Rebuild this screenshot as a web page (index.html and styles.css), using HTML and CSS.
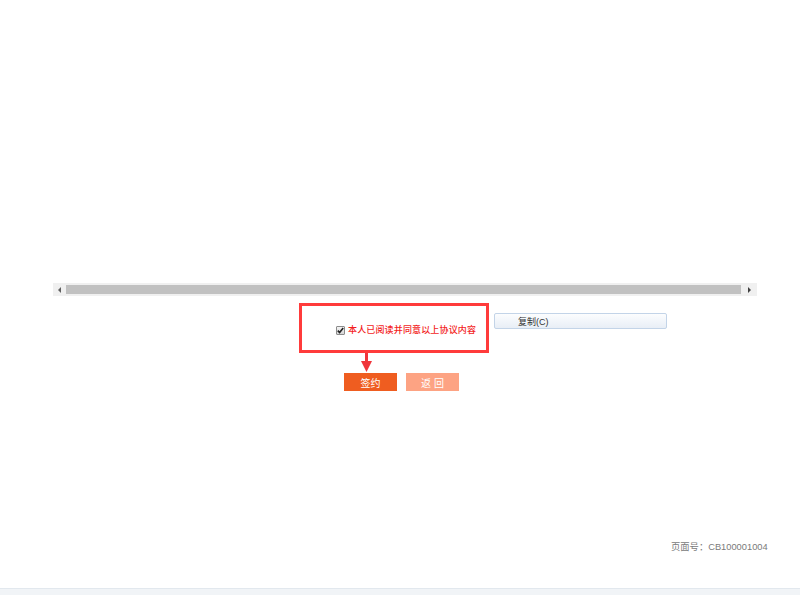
FILE: index.html
```html
<!DOCTYPE html>
<html lang="zh-CN">
<head>
    <meta charset="UTF-8">
    <meta name="viewport" content="width=device-width, initial-scale=1.0">
    <title>协议签约</title>
    <link rel="stylesheet" href="styles.css">
</head>
<body>
    <!-- 协议内容区域 -->
    <div class="doc-area"></div>

    <!-- 横向滚动条 -->
    <div class="hscroll">
        <span class="scroll-btn"><span class="tri tri-left"></span></span>
        <span class="scroll-thumb"></span>
        <span class="scroll-btn scroll-btn-right"><span class="tri tri-right"></span></span>
    </div>

    <div class="agree-row">
        <div class="agree-box">
            <label class="agree-label">
                <span class="check">
                    <svg width="7" height="7" viewBox="0 0 7 7"><path d="M0.8 3.6 L2.6 5.6 L6.2 1" fill="none" stroke="#222" stroke-width="1.6"/></svg>
                </span>
                本人已阅读并同意以上协议内容
            </label>
            <!-- 提示箭头 -->
            <svg class="arrow" width="11" height="20" viewBox="0 0 11 20">
                <rect x="4" y="0" width="3" height="9" fill="#f0353b"/>
                <polygon points="0,8 11,8 5.5,19" fill="#f0353b"/>
            </svg>
        </div>
        <button class="copy-btn">复制(C)</button>
    </div>

    <div class="actions">
        <button class="btn btn-sign">签约</button>
        <button class="btn btn-back">返 回</button>
    </div>

    <div class="page-no">页面号：CB100001004</div>
    <div class="bottom-bar"></div>
</body>
</html>
```

FILE: styles.css
```css
body {
    margin: 0;
    height: 595px;
    overflow: hidden;
    display: flex;
    flex-direction: column;
    font-family: "Liberation Sans", "Noto Sans CJK SC", sans-serif;
    background: #fff;
}
.doc-area {
    height: 283px;
    flex-shrink: 0;
}
.hscroll {
    display: flex;
    width: 704px;
    height: 13px;
    margin-left: 53px;
    background: #f0f0f0;
    flex-shrink: 0;
}
.scroll-btn {
    width: 13px;
    display: flex;
    align-items: center;
    justify-content: center;
}
.scroll-btn-right {
    width: 16px;
}
.tri {
    width: 0;
    height: 0;
    border-top: 3px solid transparent;
    border-bottom: 3px solid transparent;
}
.tri-left {
    border-right: 3px solid #606060;
}
.tri-right {
    border-left: 3px solid #404040;
}
.scroll-thumb {
    flex: 1;
    margin: 2px 0;
    background: #c1c1c1;
}
.agree-row {
    display: flex;
    align-items: flex-start;
    margin-top: 7px;
    padding-left: 299px;
}
.agree-box {
    position: relative;
    box-sizing: border-box;
    width: 190px;
    height: 50px;
    border: 3px solid #ff3b3b;
    padding: 18px 0 0 34px;
}
.agree-label {
    display: flex;
    align-items: center;
    gap: 3px;
    color: #f31d1d;
    font-size: 9px;
    font-weight: 500;
    letter-spacing: 0.15px;
    line-height: 12px;
}
.check {
    width: 9px;
    height: 9px;
    box-sizing: border-box;
    border: 1px solid #8c8c8c;
    border-radius: 1px;
    background: linear-gradient(#f4f4f4, #d6d6d6);
    display: flex;
    align-items: center;
    justify-content: center;
}
.arrow {
    position: absolute;
    left: 59px;
    top: 47px;
}
.copy-btn {
    margin: 10px 0 0 5px;
    width: 173px;
    height: 16px;
    box-sizing: border-box;
    border: 1px solid #c3d4e8;
    border-radius: 2px;
    background: linear-gradient(#fcfdfe, #e8eef6);
    font-family: inherit;
    font-size: 9px;
    color: #333;
    text-align: left;
    padding: 0 0 0 23px;
}
.actions {
    display: flex;
    gap: 9px;
    margin-top: 20px;
    padding-left: 344px;
}
.btn {
    width: 53px;
    height: 18px;
    border: none;
    padding: 0;
    font-family: inherit;
    font-size: 10px;
    color: #fff;
}
.btn-sign {
    background: #ef5d20;
}
.btn-back {
    background: #fda383;
}
.page-no {
    margin: 150px 0 0 671px;
    font-size: 9.3px;
    line-height: 12px;
    color: #7a7a7a;
}
.bottom-bar {
    margin-top: auto;
    height: 6px;
    border-top: 1px solid #e2e8ee;
    background: #f1f4f7;
}
```
